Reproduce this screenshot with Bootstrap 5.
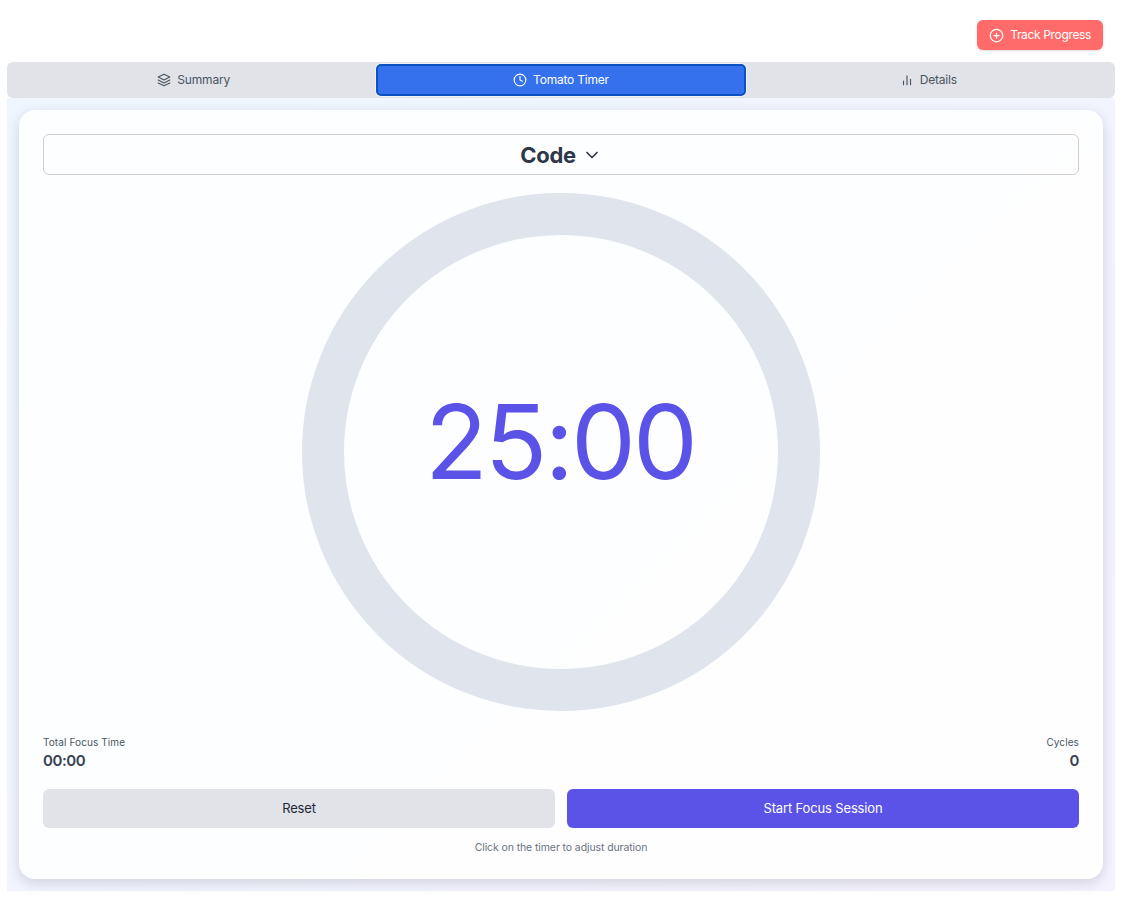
<!DOCTYPE html>
<html lang="en">
<head>
  <meta charset="UTF-8">
  <meta name="viewport" content="width=device-width, initial-scale=1">
  <title>Tomato Timer</title>
  <link href="https://cdn.jsdelivr.net/npm/bootstrap@5.3.0/dist/css/bootstrap.min.css" rel="stylesheet">
  <style>
    html, body { height: 902px; overflow: hidden; }
    body {
      background: #fff;
      font-family: Inter, "Liberation Sans", sans-serif;
      color: #1f2937;
      padding: 20px 16px 11px 7px;
      display: flex;
      flex-direction: column;
    }
    .top-row { padding-right: 12px; flex: 0 0 42px; }
    .track-btn {
      background: #ff6b6b;
      color: #fff;
      font-size: 12px;
      font-weight: 400;
      letter-spacing: -.35px;
      height: 30px;
      padding: 0 12px;
      border: 0;
      border-radius: 6px;
      gap: 6px;
      box-shadow: 0 1px 3px rgba(0, 0, 0, .15);
    }
    .track-btn:hover { background: #ff6b6b; color: #fff; }
    .tab-strip { background: #e1e3e8; border-radius: 6px; flex: 0 0 36px; padding: 3px; }
    .tab-item {
      flex: 1 1 0;
      border: 0;
      background: transparent;
      font-size: 12px;
      font-weight: 400;
      letter-spacing: -.2px;
      color: #4b5563;
      border-radius: 4px;
      gap: 6px;
    }
    .tab-item.is-on {
      background: #3571ec;
      color: #fff;
      outline: 2px solid #0b52c0;
      outline-offset: -1px;
      box-shadow: 0 0 0 2px #f1f2f5;
    }
    .tab-body {
      flex: 1 1 auto;
      min-height: 0;
      padding: 12px;
      background: linear-gradient(135deg, #eff6ff, #f5f3ff);
    }
    .timer-panel {
      height: 100%;
      background: rgba(255, 255, 255, .85);
      border-radius: 16px;
      box-shadow: 0 4px 14px rgba(0, 0, 0, .15);
      padding: 24px;
    }
    .mode-select {
      flex: 0 0 41px;
      border: 1px solid #cfcfd2;
      border-radius: 6px;
      font-size: 22px;
      font-weight: 700;
      letter-spacing: -.3px;
      color: #2d3748;
      gap: 6px;
      padding-top: 1px;
    }
    .ring-wrap { padding-top: 18px; flex: 0 0 559px; }
    .ring-face {
      width: 518px;
      height: 518px;
      border: 42px solid #dfe4ed;
      border-radius: 50%;
      padding-bottom: 21px;
    }
    .ring-time { font-size: 103px; color: #5b52e8; line-height: 1; font-weight: 400; letter-spacing: -3px; padding-right: 2px; }
    .stat-label { font-size: 10px; color: #4b5563; line-height: 14px; letter-spacing: .01em; }
    .stat-value { font-size: 15px; font-weight: 600; color: #374151; line-height: 20px; letter-spacing: -.4px; padding-top: 2px; }
    .stat-row { padding-top: 1px; margin-bottom: 18px; }
    .action-row { gap: 12px; }
    .action-btn { height: 39px; font-size: 13px; font-weight: 400; letter-spacing: -.15px; border: 0; border-radius: 6px; flex: 1 1 0; }
    .action-reset, .action-reset:hover { background: #e1e3e8; color: #1f2937; }
    .action-start, .action-start:hover { background: #5b52e8; color: #fff; }
    .hint-line { font-size: 10.5px; color: #6b7280; margin-top: 12px; letter-spacing: -.1px; }
  </style>
</head>
<body>

  <div class="top-row d-flex justify-content-end align-items-start">
    <button class="btn track-btn d-flex align-items-center">
      <svg width="15" height="15" viewBox="0 0 24 24" fill="none" stroke="currentColor" stroke-width="2" stroke-linecap="round"><circle cx="12" cy="12" r="10"/><path d="M12 8v8M8 12h8"/></svg>
      Track Progress
    </button>
  </div>

  <div class="tab-strip d-flex">
    <button class="tab-item d-flex align-items-center justify-content-center">
      <svg width="14" height="14" viewBox="0 0 24 24" fill="none" stroke="currentColor" stroke-width="2" stroke-linecap="round" stroke-linejoin="round"><path d="M12 2 2 7l10 5 10-5-10-5Z"/><path d="m2 12 10 5 10-5"/><path d="m2 17 10 5 10-5"/></svg>
      Summary
    </button>
    <button class="tab-item is-on d-flex align-items-center justify-content-center">
      <svg width="14" height="14" viewBox="0 0 24 24" fill="none" stroke="currentColor" stroke-width="2" stroke-linecap="round" stroke-linejoin="round"><circle cx="12" cy="12" r="10"/><path d="M12 6v6l4 2"/></svg>
      Tomato Timer
    </button>
    <button class="tab-item d-flex align-items-center justify-content-center">
      <svg width="14" height="14" viewBox="0 0 24 24" fill="none" stroke="currentColor" stroke-width="2" stroke-linecap="round"><path d="M18 20v-9M12 20V5M6 20v-6"/></svg>
      Details
    </button>
  </div>

  <div class="tab-body">
    <div class="timer-panel d-flex flex-column">
      <div class="mode-select d-flex align-items-center justify-content-center">
        Code
        <svg width="20" height="20" viewBox="0 0 24 24" fill="none" stroke="currentColor" stroke-width="2" stroke-linecap="round" stroke-linejoin="round"><path d="m6 9 6 6 6-6"/></svg>
      </div>

      <div class="ring-wrap d-flex justify-content-center">
        <div class="ring-face d-flex align-items-center justify-content-center">
          <span class="ring-time">25:00</span>
        </div>
      </div>

      <div class="stat-row d-flex justify-content-between">
        <div>
          <div class="stat-label">Total Focus Time</div>
          <div class="stat-value">00:00</div>
        </div>
        <div class="text-end">
          <div class="stat-label">Cycles</div>
          <div class="stat-value">0</div>
        </div>
      </div>

      <div class="action-row d-flex">
        <button class="btn action-btn action-reset">Reset</button>
        <button class="btn action-btn action-start">Start Focus Session</button>
      </div>
      <div class="hint-line text-center">Click on the timer to adjust duration</div>
    </div>
  </div>

<script src="https://cdn.jsdelivr.net/npm/bootstrap@5.3.0/dist/js/bootstrap.bundle.min.js"></script>
</body>
</html>
